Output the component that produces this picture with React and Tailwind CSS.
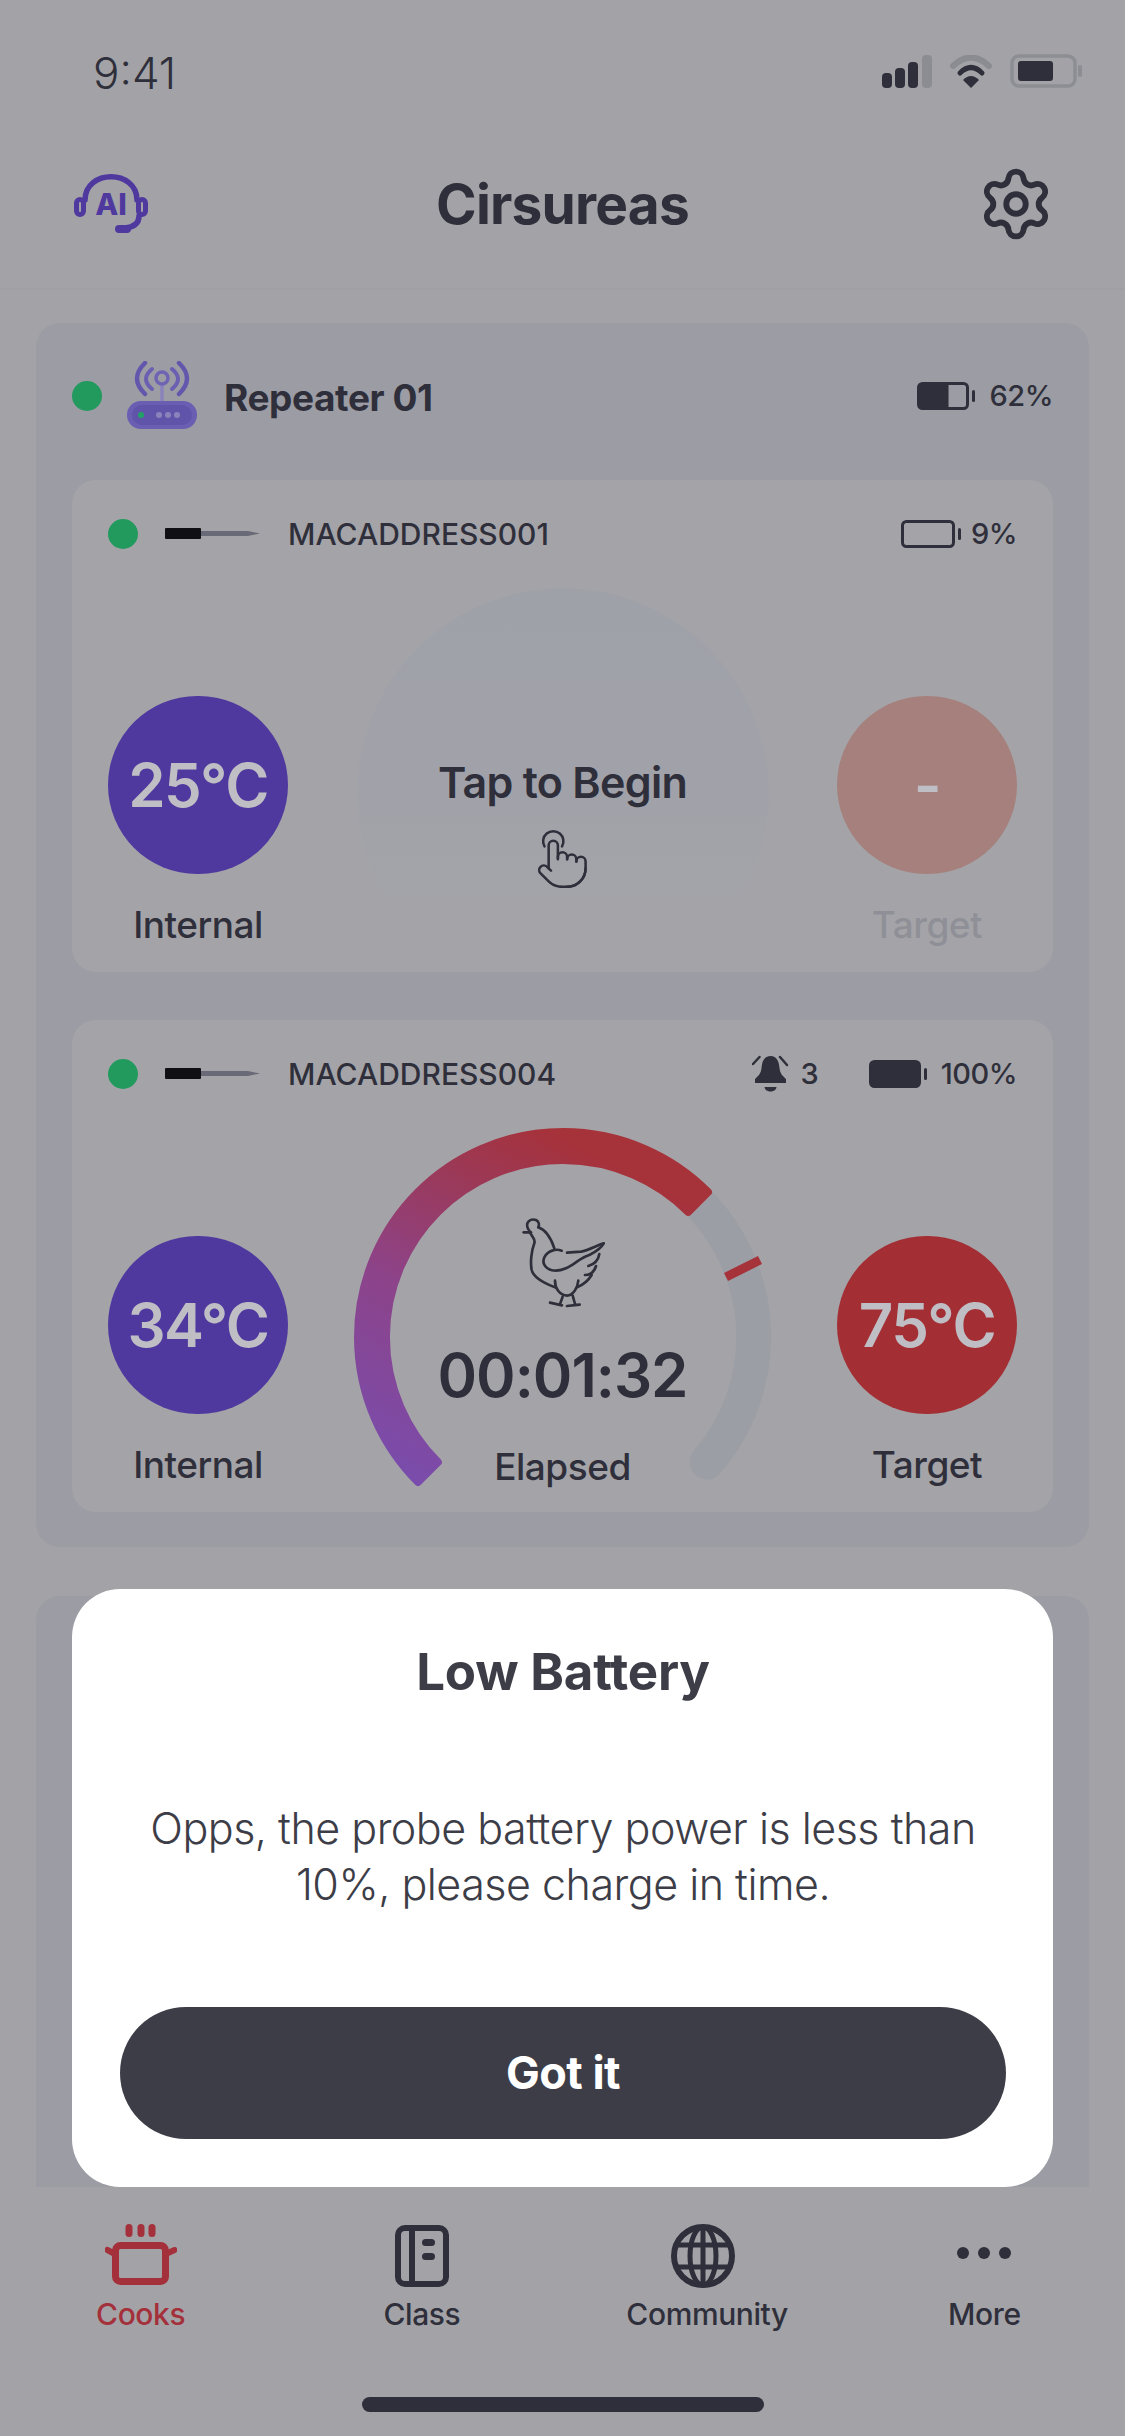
import React from 'react';
import { Settings } from 'lucide-react';

const Battery = ({ level = 0, width = 58 }) => {
  const bodyW = width - 6;
  const fillW = ((bodyW - 6) * level) / 100;
  return (
    <svg width={width} height="28" viewBox={`0 0 ${width} 28`} className="shrink-0">
      <rect x="1.5" y="1.5" width={bodyW - 3} height="25" rx="4" fill="none" stroke="#2f2f3b" strokeWidth="3" />
      <rect x="3" y="3" width={fillW} height="22" fill="#2f2f3b" />
      <rect x={width - 3} y="8" width="3" height="12" rx="1.5" fill="#2f2f3b" />
    </svg>
  );
};

const ProbeIcon = () => (
  <svg width="96" height="14" viewBox="0 0 96 14" className="shrink-0">
    <rect x="0" y="1" width="36" height="11" rx="1" fill="#0f0f14" />
    <path d="M36 4 H83 L95 6.5 L83 9 H36 Z" fill="#696a78" />
  </svg>
);

const Router = () => (
  <svg width="72" height="70" viewBox="0 0 72 70" className="shrink-0">
    <g fill="none" strokeLinecap="round">
      <path d="M19 2 Q3 17.5 19 33" stroke="#6357ad" strokeWidth="4.5" />
      <path d="M53 2 Q69 17.5 53 33" stroke="#6357ad" strokeWidth="4.5" />
      <path d="M26 8 Q14 18 26 28" stroke="#6a5fb0" strokeWidth="4" />
      <path d="M46 8 Q58 18 46 28" stroke="#6a5fb0" strokeWidth="4" />
      <path d="M36 24 V42" stroke="#8a83bb" strokeWidth="3.5" />
      <circle cx="36" cy="17" r="6" stroke="#6f64b4" strokeWidth="3.5" />
    </g>
    <rect x="1" y="40" width="70" height="28" rx="14" fill="#6a5eb2" />
    <rect x="6" y="44" width="60" height="20" rx="10" fill="#5f54a9" />
    <circle cx="15" cy="54" r="3" fill="#23a267" />
    <circle cx="33" cy="54" r="3" fill="#8a83bb" />
    <circle cx="42" cy="54" r="3" fill="#8a83bb" />
    <circle cx="51" cy="54" r="3" fill="#8a83bb" />
  </svg>
);

const AiHeadset = () => (
  <div className="relative w-[78px] h-[62px]">
    <svg width="78" height="62" viewBox="0 0 78 62" className="absolute inset-0">
      <g fill="none" stroke="#4f399f" strokeWidth="5.5" strokeLinecap="round">
        <path d="M12 27 C12 -4 64 -4 64 27" />
        <rect x="3.5" y="26.5" width="7" height="15" rx="3.5" strokeWidth="5" />
        <rect x="65.5" y="26.5" width="7" height="15" rx="3.5" strokeWidth="5" />
        <path d="M66 43 C66 50 62 54 52 55" />
        <path d="M46 56 L54 56" strokeWidth="8" />
      </g>
    </svg>
    <span className="absolute left-[18px] top-[14px] w-[40px] text-center text-[30px] leading-[34px] font-extrabold text-[#4f399f]">AI</span>
  </div>
);

const Hand = () => (
  <svg width="49" height="60" viewBox="1.5 -3.5 21 26" fill="none" stroke="#2f2f3b" strokeWidth="1.1" strokeLinecap="round" strokeLinejoin="round">
    <path d="M4.2 4.5 A4.4 4.4 0 1 1 11.8 4.5" />
    <path d="M22 14a8 8 0 0 1-8 8" />
    <path d="M18 11v-1a2 2 0 0 0-2-2a2 2 0 0 0-2 2" />
    <path d="M14 10V9a2 2 0 0 0-2-2a2 2 0 0 0-2 2v1" />
    <path d="M10 9.5V4a2 2 0 0 0-2-2a2 2 0 0 0-2 2v10" />
    <path d="M18 11a2 2 0 1 1 4 0v3a8 8 0 0 1-8 8h-2c-2.8 0-4.5-.86-5.99-2.34l-3.6-3.6a2 2 0 0 1 2.83-2.82L7 15" />
  </svg>
);

const Chicken = () => (
  <svg width="180" height="140" viewBox="0 0 540 420" fill="none" stroke="#2f2f3b" strokeWidth="8" strokeLinecap="round" strokeLinejoin="round">
    <path d="M142 148 C130 125 150 115 165 120 C175 125 175 135 172 142" />
    <path d="M128 157 L150 157" />
    <path d="M145 152 C150 170 165 175 160 190 C150 215 148 250 152 270 C158 295 190 310 222 322" />
    <path d="M172 142 C195 150 210 175 220 205" />
    <path d="M242 212 C225 205 200 212 190 232 C180 255 200 272 225 272 C265 272 290 235 325 225 C345 215 360 205 368 190" />
    <path d="M258 218 L300 215 C320 212 345 198 368 190" />
    <path d="M355 222 C352 240 342 252 322 258" />
    <path d="M345 258 C340 275 328 285 312 285" />
    <path d="M332 285 C320 305 305 315 288 322" />
    <path d="M222 302 C222 325 235 345 258 347 C275 347 290 325 292 302" />
    <path d="M245 350 L236 375 M207 368 L243 376 M275 347 L283 375 M258 378 L296 374" />
  </svg>
);

const Bell = () => (
  <svg width="38" height="38" viewBox="0 0 38 38" className="shrink-0">
    <path d="M18.5 1 C25 1 27 7 27.5 13 C28 19 31 21 34 24 V28 H3 V24 C6 21 9 19 9.5 13 C10 7 12 1 18.5 1 Z" fill="#2f2f3b" />
    <path d="M12.5 32 H24.5 C24 38 13 38 12.5 32 Z" fill="#2f2f3b" />
    <path d="M1 9 L7.5 2 M28 2 L35 10" stroke="#2f2f3b" strokeWidth="2.5" strokeLinecap="round" />
  </svg>
);

const Gauge = () => (
  <svg width="418" height="362" viewBox="0 0 418 362" className="absolute inset-0">
    <defs>
      <linearGradient id="arc" gradientUnits="userSpaceOnUse" x1="60" y1="350" x2="230" y2="20">
        <stop offset="0" stopColor="#7a4cab" />
        <stop offset="0.45" stopColor="#8d4389" />
        <stop offset="0.75" stopColor="#9a3a5c" />
        <stop offset="1" stopColor="#a6323a" />
      </linearGradient>
    </defs>
    <path d="M332 63 A191 191 0 0 1 353 334" fill="none" stroke="#9c9ea6" strokeWidth="35" strokeLinecap="round" />
    <path d="M64 354 A205 205 0 0 1 354 64 L334.2 83.8 A177 177 0 0 0 83.8 334.2 Z" fill="url(#arc)" stroke="url(#arc)" strokeWidth="8" strokeLinejoin="round" />
    <path d="M372 149 L406 132" stroke="#a6323a" strokeWidth="9" />
  </svg>
);

const ProbeHeader = ({ mac, children }) => (
  <div className="flex items-center h-[108px]">
    <span className="w-[30px] h-[30px] rounded-full bg-[#229a5e]" />
    <span className="ml-[27px]"><ProbeIcon /></span>
    <span className="ml-[27px] text-[30px] font-medium">{mac}</span>
    <div className="ml-auto flex items-center">{children}</div>
  </div>
);

const TempColumn = ({ value, label, circle, labelColor, valueColor = 'text-[#bfbec4]' }) => (
  <div className="w-[180px] pt-[108px] flex flex-col items-center">
    <div className={`w-[180px] h-[180px] rounded-full flex items-center justify-center text-[60px] tracking-[-1.5px] font-semibold ${circle} ${valueColor}`}>{value}</div>
    <div className={`mt-[26px] h-[50px] leading-[50px] text-[37px] tracking-[-0.5px] font-medium ${labelColor}`}>{label}</div>
  </div>
);

const Tab = ({ icon, label, active, className = '' }) => (
  <div className="flex flex-col items-center">
    <div className="h-[66px] flex items-center justify-center">{icon}</div>
    <div className={`mt-[5px] h-[40px] leading-[40px] text-[30px] tracking-[-0.4px] font-medium ${active ? 'text-[#a3303a]' : 'text-[#2f2f3b]'} ${className}`}>{label}</div>
  </div>
);

export default function App() {
  return (
    <div className="relative w-[1125px] h-[2436px] overflow-hidden flex flex-col bg-[#a3a3a7] text-[#2f2f3b] font-['Inter',sans-serif]">
      {/* status bar */}
      <div className="h-[130px] shrink-0 flex items-start justify-between pl-[93px] pr-[43px] pt-[46px]">
        <span className="text-[44px] leading-[54px] font-light">9:41</span>
        <div className="flex items-center gap-[18px] pt-[8px]">
          <svg width="50" height="33" viewBox="0 0 50 33">
            <rect x="0" y="18" width="10" height="15" rx="4" fill="#2f2f3b" />
            <rect x="13" y="13" width="10" height="20" rx="4" fill="#2f2f3b" />
            <rect x="26" y="7" width="10" height="26" rx="4" fill="#2f2f3b" />
            <rect x="40" y="0" width="10" height="33" rx="4" fill="#8c8d93" />
          </svg>
          <svg width="42" height="33" viewBox="0 0 42 33">
            <path d="M3 11 Q21 -6 39 11" fill="none" stroke="#8b8c92" strokeWidth="6" strokeLinecap="round" />
            <path d="M10 18 Q21 7 32 18" fill="none" stroke="#2f2f3b" strokeWidth="5" strokeLinecap="round" />
            <path d="M21 33 L13 25 Q21 17 29 25 Z" fill="#2f2f3b" />
          </svg>
          <svg width="72" height="34" viewBox="0 0 72 34">
            <rect x="2" y="2" width="63" height="30" rx="7" fill="none" stroke="#8d8e93" strokeWidth="3.5" />
            <rect x="8" y="7" width="35" height="20" rx="3" fill="#2f2f3b" />
            <rect x="68" y="11" width="4" height="12" rx="2" fill="#8d8e93" />
          </svg>
        </div>
      </div>

      {/* header */}
      <div className="h-[160px] shrink-0 flex items-center justify-between px-[73px] pb-[10px] border-b-2 border-[#9f9fa4]">
        <div className="w-[80px]"><AiHeadset /></div>
        <h1 className="text-[55px] tracking-[-0.8px] font-bold">Cirsureas</h1>
        <div className="w-[80px] flex justify-end"><Settings size={78} strokeWidth={1.8} className="-mr-[3px]" /></div>
      </div>

      {/* cooks list */}
      <div className="flex-1 overflow-hidden pt-[33px] px-[36px]">
        <section className="rounded-[24px] bg-[#9b9ca4] px-[36px] pb-[35px]">
          <div className="flex items-center h-[146px] mb-[11px]">
            <span className="w-[30px] h-[30px] rounded-full bg-[#229a5e]" />
            <span className="ml-[24px]"><Router /></span>
            <span className="ml-[26px] pt-[4px] text-[37px] tracking-[-0.4px] font-bold">Repeater 01</span>
            <div className="ml-auto flex items-center gap-[15px]">
              <Battery level={62} />
              <span className="text-[29px] tracking-[-0.5px] font-medium">62%</span>
            </div>
          </div>

          <div className="rounded-[24px] bg-[#a4a4a8] px-[36px] pb-[22px]">
            <ProbeHeader mac="MACADDRESS001">
              <Battery level={0} width={60} />
              <span className="ml-[10px] text-[29px] tracking-[-0.5px] font-medium">9%</span>
            </ProbeHeader>
            <div className="flex justify-between h-[362px]">
              <TempColumn value="25°C" label="Internal" circle="bg-[#4f399f]" labelColor="text-[#2f2f3b]" />
              <div className="relative w-[418px] flex flex-col items-center pt-[169px]">
                <div className="absolute inset-0 overflow-hidden">
                  <div className="mx-auto w-[412px] h-[412px] rounded-full bg-gradient-to-b from-[#9fa1a9] via-[#a1a2a9] via-50% to-[#a4a4a8] to-85%" />
                </div>
                <div className="relative h-[50px] leading-[50px] text-[43px] tracking-[-0.7px] font-semibold">Tap to Begin</div>
                <div className="relative mt-[21px]"><Hand /></div>
              </div>
              <TempColumn value="-" label="Target" circle="bg-[#a5807c]" labelColor="text-[#8f9097]" />
            </div>
          </div>

          <div className="mt-[48px] rounded-[24px] bg-[#a4a4a8] px-[36px] pb-[22px]">
            <ProbeHeader mac="MACADDRESS004">
              <Bell />
              <span className="ml-[11px] text-[29px] font-medium">3</span>
              <span className="ml-[50px]"><Battery level={100} /></span>
              <span className="ml-[14px] text-[29px] tracking-[-0.5px] font-medium">100%</span>
            </ProbeHeader>
            <div className="flex justify-between h-[362px]">
              <TempColumn value="34°C" label="Internal" circle="bg-[#4f399f]" labelColor="text-[#2f2f3b]" />
              <div className="relative w-[418px] flex flex-col items-center pt-[52px]">
                <Gauge />
                <div className="relative ml-[16px]"><Chicken /></div>
                <div className="relative mt-[20px] h-[70px] leading-[70px] text-[60px] tracking-[-1px] font-semibold">00:01:32</div>
                <div className="relative mt-[32px] h-[50px] leading-[50px] text-[37px] tracking-[-0.5px] font-medium">Elapsed</div>
              </div>
              <TempColumn value="75°C" label="Target" circle="bg-[#a32f35]" labelColor="text-[#2f2f3b]" />
            </div>
          </div>
        </section>

        <section className="mt-[49px] h-[700px] rounded-[24px] bg-[#9b9ca4]" />
      </div>

      {/* tab bar */}
      <div className="h-[249px] shrink-0 bg-[#a3a3a7] pt-[36px]">
        <div className="grid grid-cols-4">
          <Tab
            active
            label="Cooks"
            icon={
              <svg width="72" height="64" viewBox="0 0 72 64">
                <rect x="10.5" y="21.5" width="50" height="36" rx="5" fill="none" stroke="#a3303a" strokeWidth="7" />
                <path d="M2.5 26 L8 29 M69.5 26 L63 29" stroke="#a3303a" strokeWidth="6" strokeLinecap="round" />
                <rect x="20.5" y="0" width="7" height="13" rx="3.5" fill="#a3303a" />
                <rect x="32.5" y="0" width="7" height="13" rx="3.5" fill="#a3303a" />
                <rect x="43.5" y="0" width="7" height="13" rx="3.5" fill="#a3303a" />
              </svg>
            }
          />
          <Tab
            label="Class"
            icon={
              <svg width="54" height="62" viewBox="0 0 54 62">
                <rect x="3" y="3" width="48" height="56" rx="7" fill="none" stroke="#2f2f3b" strokeWidth="6" />
                <path d="M17 3 V59" stroke="#2f2f3b" strokeWidth="6" />
                <rect x="27" y="14" width="13" height="7" rx="3.5" fill="#2f2f3b" />
                <rect x="27" y="28" width="13" height="7" rx="3.5" fill="#2f2f3b" />
              </svg>
            }
          />
          <Tab
            label="Community"
            className="ml-[8px]"
            icon={
              <svg width="64" height="64" viewBox="0 0 64 64" fill="none" stroke="#2f2f3b" strokeWidth="5">
                <circle cx="32" cy="32" r="29" strokeWidth="6" />
                <ellipse cx="32" cy="32" rx="13" ry="29" />
                <path d="M32 3 V61 M6 21 H58 M6 43 H58" />
              </svg>
            }
          />
          <Tab
            label="More"
            icon={
              <div className="flex gap-[9px] -mt-[6px]">
                <span className="w-[12px] h-[12px] rounded-full bg-[#2f2f3b]" />
                <span className="w-[12px] h-[12px] rounded-full bg-[#2f2f3b]" />
                <span className="w-[12px] h-[12px] rounded-full bg-[#2f2f3b]" />
              </div>
            }
          />
        </div>
        <div className="mt-[63px] mx-auto w-[402px] h-[15px] rounded-full bg-[#2f2f3b]" />
      </div>

      {/* low battery dialog */}
      <div className="absolute left-[72px] top-[1589px] w-[981px] h-[598px] rounded-[48px] bg-white text-[#3d3d47] pl-[48px] pr-[47px] pt-[53px] text-center">
        <h2 className="h-[60px] leading-[60px] text-[51px] tracking-[-0.2px] font-bold">Low Battery</h2>
        <p className="mt-[98px] text-[43px] leading-[56px] tracking-[-0.5px] font-light">Opps, the probe battery power is less than<br />10%, please charge in time.</p>
        <button className="mt-[95px] w-full h-[132px] rounded-full bg-[#3d3d47] text-white text-[45px] tracking-[-0.5px] font-bold">Got it</button>
      </div>
    </div>
  );
}
